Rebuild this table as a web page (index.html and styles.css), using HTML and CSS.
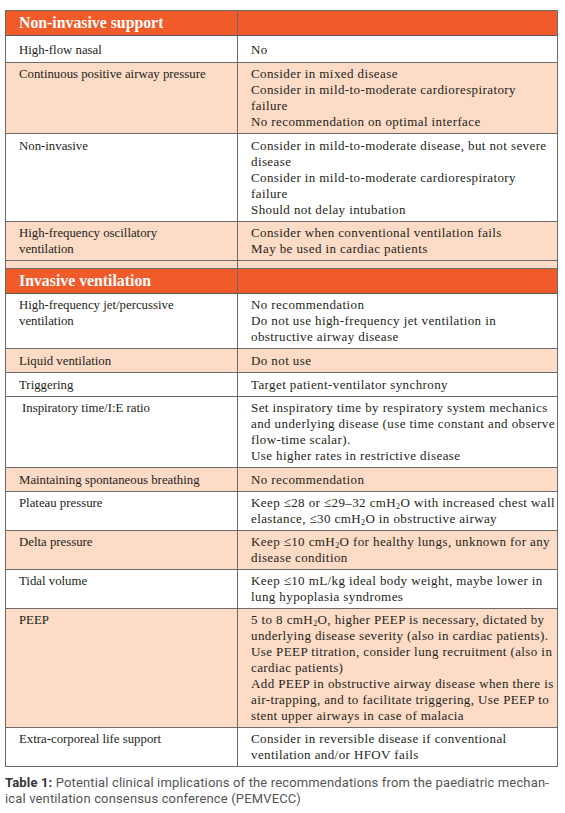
FILE: index.html
```html
<!DOCTYPE html>
<html lang="en">
  <head>
    <meta charset="UTF-8" />
    <title>Table 1</title>
    <link rel="stylesheet" href="styles.css">
  </head>
  <body>
    <table class="vent-table">
      <colgroup>
        <col class="col-left" />
        <col class="col-right" />
      </colgroup>
      <tr class="section-row">
        <th>Non-invasive support</th>
        <th></th>
      </tr>
      <tr class="single first">
        <td>High-flow nasal</td>
        <td>No</td>
      </tr>
      <tr class="shaded">
        <td>Continuous positive airway pressure</td>
        <td>
          Consider in mixed disease<br />
          Consider in mild-to-moderate cardiorespiratory<br />failure<br />
          No recommendation on optimal interface
        </td>
      </tr>
      <tr class="spaced">
        <td>Non-invasive</td>
        <td>
          Consider in mild-to-moderate disease, but not severe<br />disease<br />
          Consider in mild-to-moderate cardiorespiratory<br />failure<br />
          Should not delay intubation
        </td>
      </tr>
      <tr class="shaded">
        <td>High-frequency oscillatory<br />ventilation</td>
        <td>
          Consider when conventional ventilation fails<br />
          May be used in cardiac patients
        </td>
      </tr>
      <tr class="shaded spacer">
        <td></td>
        <td></td>
      </tr>
      <tr class="section-row">
        <th>Invasive ventilation</th>
        <th></th>
      </tr>
      <tr>
        <td>High-frequency jet/percussive<br />ventilation</td>
        <td>
          No recommendation<br />
          Do not use high-frequency jet ventilation in<br />obstructive airway disease
        </td>
      </tr>
      <tr class="shaded single">
        <td>Liquid ventilation</td>
        <td>Do not use</td>
      </tr>
      <tr class="single">
        <td>Triggering</td>
        <td>Target patient-ventilator synchrony</td>
      </tr>
      <tr>
        <td class="indent">Inspiratory time/I:E ratio</td>
        <td>
          Set inspiratory time by respiratory system mechanics<br />
          and underlying disease (use time constant and observe<br />
          flow-time scalar).<br />
          Use higher rates in restrictive disease
        </td>
      </tr>
      <tr class="shaded single">
        <td>Maintaining spontaneous breathing</td>
        <td>No recommendation</td>
      </tr>
      <tr>
        <td>Plateau pressure</td>
        <td>
          Keep ≤28 or ≤29–32 cmH<sub>2</sub>O with increased chest wall<br />
          elastance, ≤30 cmH<sub>2</sub>O in obstructive airway
        </td>
      </tr>
      <tr class="shaded">
        <td>Delta pressure</td>
        <td>
          Keep ≤10 cmH<sub>2</sub>O for healthy lungs, unknown for any<br />
          disease condition
        </td>
      </tr>
      <tr>
        <td>Tidal volume</td>
        <td>
          Keep ≤10 mL/kg ideal body weight, maybe lower in<br />
          lung hypoplasia syndromes
        </td>
      </tr>
      <tr class="shaded">
        <td>PEEP</td>
        <td>
          5 to 8 cmH<sub>2</sub>O, higher PEEP is necessary, dictated by<br />
          underlying disease severity (also in cardiac patients).<br />
          Use PEEP titration, consider lung recruitment (also in<br />
          cardiac patients)<br />
          Add PEEP in obstructive airway disease when there is<br />
          air-trapping, and to facilitate triggering, Use PEEP to<br />
          stent upper airways in case of malacia
        </td>
      </tr>
      <tr>
        <td>Extra-corporeal life support</td>
        <td>
          Consider in reversible disease if conventional<br />
          ventilation and/or HFOV fails
        </td>
      </tr>
    </table>

    <p class="caption">
      <strong>Table 1:</strong> Potential clinical implications of the recommendations from the paediatric mechan-<br />ical ventilation consensus conference (PEMVECC)
    </p>
  </body>
</html>
```

FILE: styles.css
```css
body,
html {
  margin: 0;
  padding: 0;
  background-color: #ffffff;
}

body {
  padding: 10px 0 0 5px;
}

.vent-table {
  width: 553px;
  table-layout: fixed;
  border-collapse: collapse;
  border: 1px solid #5a5a5a;
  font-family: "Liberation Serif", "DejaVu Serif", serif;
  font-size: 12.8px;
  line-height: 16px;
  color: #231f20;
}

.col-left {
  width: 232px;
}

.vent-table td {
  border: 1px solid #6b6b6b;
  padding: 3px 8px 3px 13px;
  vertical-align: top;
  white-space: nowrap;
}

.vent-table td + td {
  font-size: 13px;
  letter-spacing: 0.4px;
}

.vent-table .single td {
  padding-top: 4px;
  padding-bottom: 3px;
}

.vent-table .first td {
  padding-top: 6px;
  padding-bottom: 4px;
}

.vent-table .spaced td {
  padding-top: 4px;
  padding-bottom: 3px;
}

.vent-table td.indent {
  padding-left: 16px;
}

.vent-table .shaded td {
  background-color: #fddbc6;
}

.vent-table .spacer td {
  height: 7px;
  padding: 0;
}

.section-row th {
  background-color: #f15a29;
  color: #ffffff;
  font-size: 15.8px;
  font-weight: bold;
  text-align: left;
  height: 24px;
  padding: 0 8px 0 13px;
  border: 1px solid #6b6b6b;
  border-bottom-color: #5a5a5a;
}

sub {
  font-size: 8px;
  line-height: 0;
  vertical-align: -2px;
}

.caption {
  margin: 8px 0 0 0;
  font-family: "Roboto", "Liberation Sans", sans-serif;
  font-size: 13px;
  line-height: 16px;
  letter-spacing: 0.15px;
  color: #555555;
}

.caption strong {
  color: #333333;
  font-weight: bold;
}
```
